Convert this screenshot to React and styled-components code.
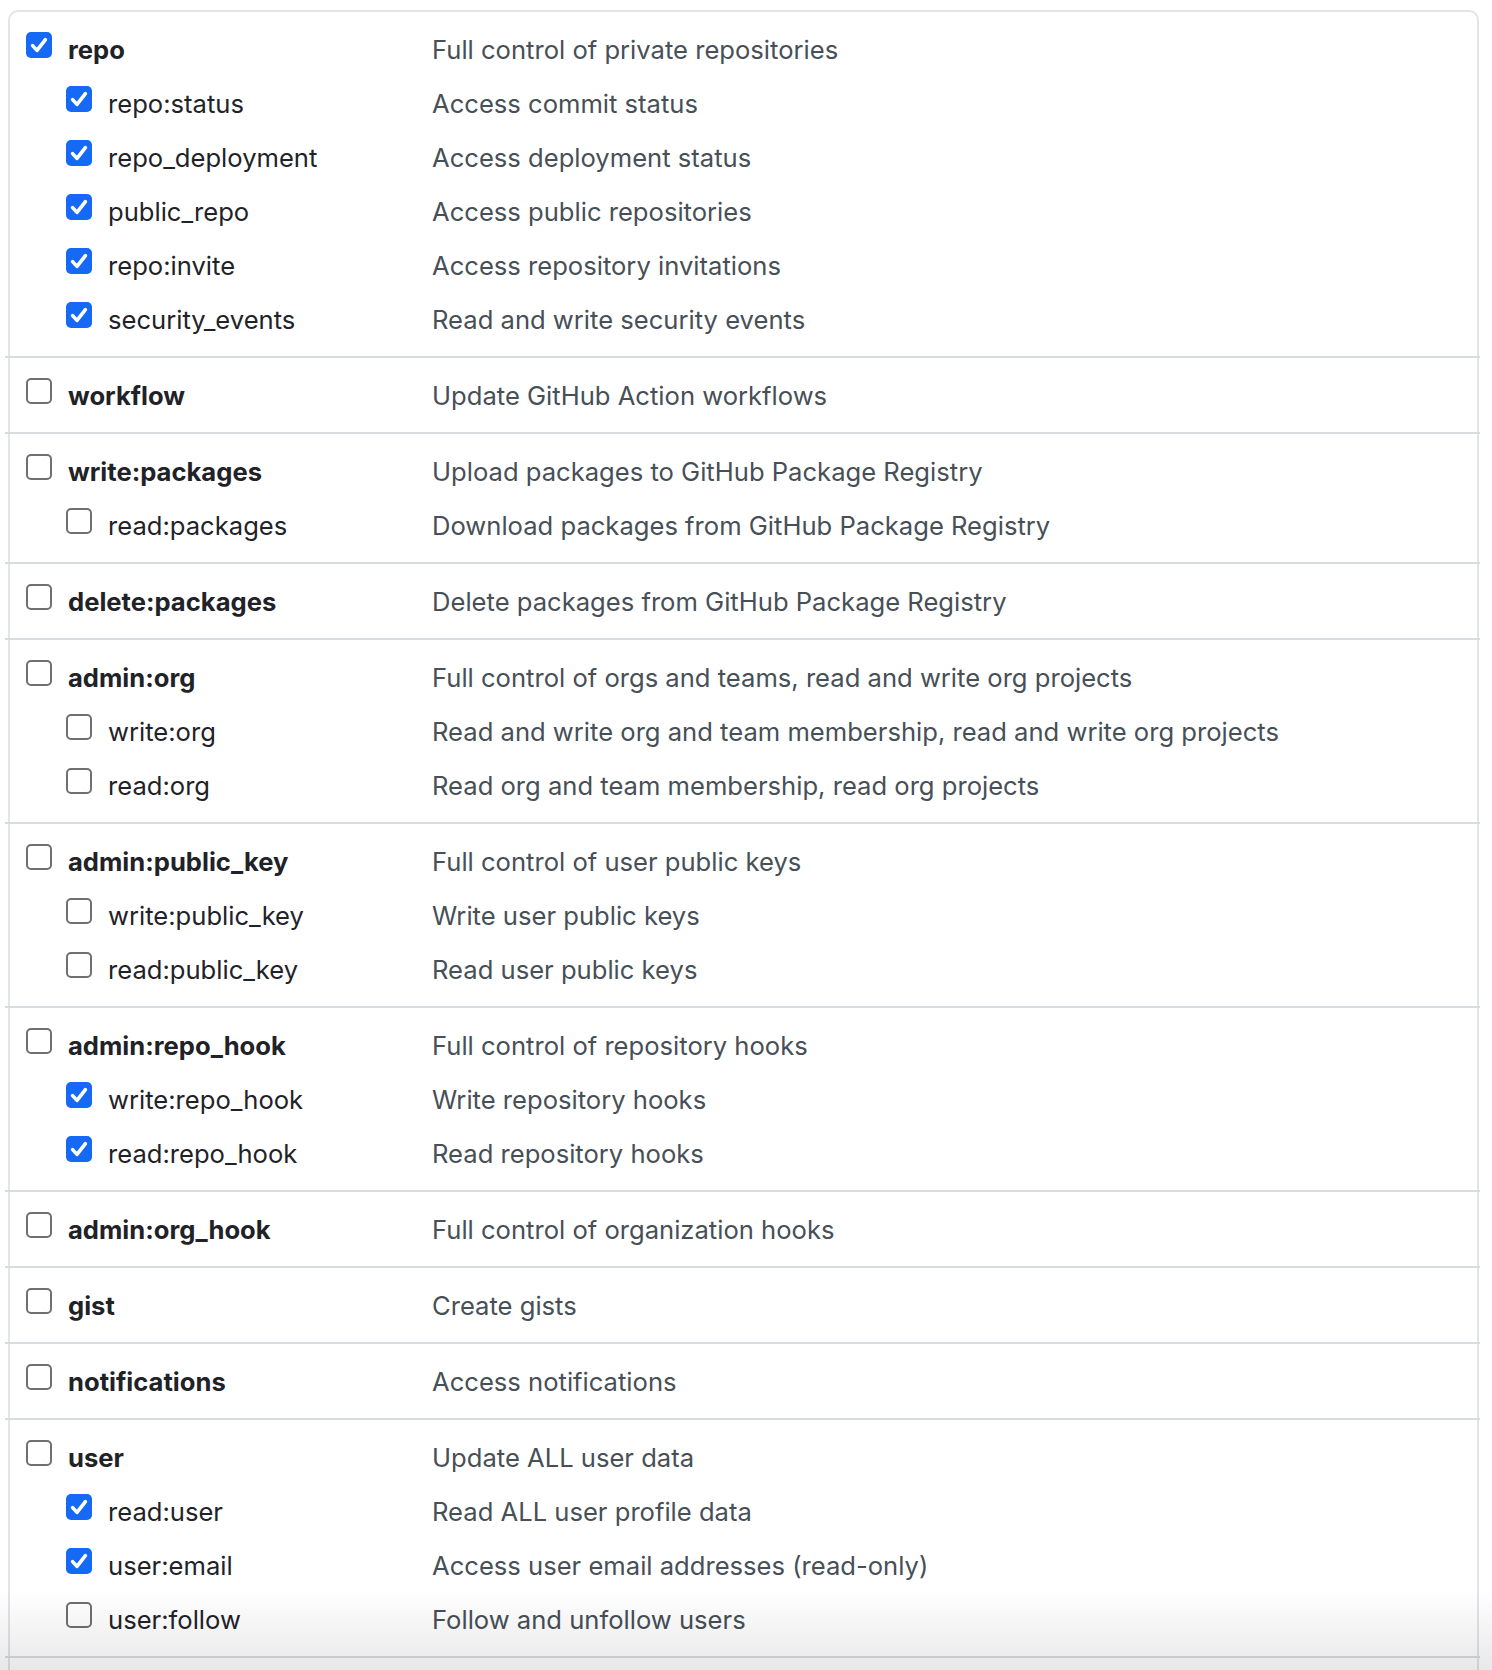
import React from "react";
import styled, { createGlobalStyle } from "styled-components";

const GlobalStyle = createGlobalStyle`
  html, body {
    margin: 0;
    padding: 0;
    background: #ffffff;
    height: 1670px;
    overflow: hidden;
  }
  body {
    font-family: Inter, "Noto Sans", "Liberation Sans", sans-serif;
    -webkit-font-smoothing: antialiased;
  }
`;

const Page = styled.div`
  padding: 10px 13px 0 8px;
`;

const ScopeList = styled.div`
  border: 2px solid #e1e4e8;
  border-bottom: none;
  border-radius: 10px 10px 0 0;
`;

const Group = styled.div`
  margin: 0 -3px 0 -5px;
  padding: 6px 3px 14px 5px;
  border-top: ${(p) => (p.first ? "none" : "2px solid #d8dcdf")};
  min-height: 40px;
`;

const Row = styled.div`
  display: grid;
  grid-template-columns: 422px 1fr;
  align-items: center;
  height: 54px;
`;

const LabelCell = styled.label`
  display: flex;
  align-items: center;
  gap: 16px;
  padding-left: ${(p) => (p.sub ? "56px" : "16px")};
  font-size: 25.6px;
  font-weight: ${(p) => (p.sub ? 400 : 700)};
  color: #1f2328;
`;

const LabelText = styled.span`
  padding-top: 8px;
`;

const Description = styled.span`
  padding-top: 8px;
  font-size: 25.6px;
  color: #474f57;
`;

const Box = styled.span`
  flex: none;
  box-sizing: border-box;
  width: 26px;
  height: 26px;
  border-radius: 5px;
  display: inline-flex;
  align-items: center;
  justify-content: center;
  background: ${(p) => (p.checked ? "#1569f4" : "#ffffff")};
  border: ${(p) => (p.checked ? "none" : "2px solid #707070")};
`;

const Fade = styled.div`
  position: fixed;
  left: 0;
  right: 0;
  bottom: 0;
  height: 80px;
  pointer-events: none;
  background: linear-gradient(rgba(0, 0, 0, 0), rgba(0, 0, 0, 0.09));
`;

const Checkbox = ({ checked }) => (
  <Box checked={checked}>
    {checked && (
      <svg width="26" height="26" viewBox="0 0 26 26">
        <path
          d="M6.6 13.6 L11 18.4 L19.4 7.6"
          fill="none"
          stroke="#fff"
          strokeWidth="3.6"
          strokeLinecap="round"
          strokeLinejoin="round"
        />
      </svg>
    )}
  </Box>
);

const scopes = [
  {
    name: "repo", desc: "Full control of private repositories", checked: true,
    children: [
      { name: "repo:status", desc: "Access commit status", checked: true },
      { name: "repo_deployment", desc: "Access deployment status", checked: true },
      { name: "public_repo", desc: "Access public repositories", checked: true },
      { name: "repo:invite", desc: "Access repository invitations", checked: true },
      { name: "security_events", desc: "Read and write security events", checked: true },
    ],
  },
  { name: "workflow", desc: "Update GitHub Action workflows" },
  {
    name: "write:packages", desc: "Upload packages to GitHub Package Registry",
    children: [{ name: "read:packages", desc: "Download packages from GitHub Package Registry" }],
  },
  { name: "delete:packages", desc: "Delete packages from GitHub Package Registry" },
  {
    name: "admin:org", desc: "Full control of orgs and teams, read and write org projects",
    children: [
      { name: "write:org", desc: "Read and write org and team membership, read and write org projects" },
      { name: "read:org", desc: "Read org and team membership, read org projects" },
    ],
  },
  {
    name: "admin:public_key", desc: "Full control of user public keys",
    children: [
      { name: "write:public_key", desc: "Write user public keys" },
      { name: "read:public_key", desc: "Read user public keys" },
    ],
  },
  {
    name: "admin:repo_hook", desc: "Full control of repository hooks",
    children: [
      { name: "write:repo_hook", desc: "Write repository hooks", checked: true },
      { name: "read:repo_hook", desc: "Read repository hooks", checked: true },
    ],
  },
  { name: "admin:org_hook", desc: "Full control of organization hooks" },
  { name: "gist", desc: "Create gists" },
  { name: "notifications", desc: "Access notifications" },
  {
    name: "user", desc: "Update ALL user data",
    children: [
      { name: "read:user", desc: "Read ALL user profile data", checked: true },
      { name: "user:email", desc: "Access user email addresses (read-only)", checked: true },
      { name: "user:follow", desc: "Follow and unfollow users" },
    ],
  },
];

const ScopeRow = ({ scope, sub }) => (
  <Row>
    <LabelCell sub={sub}>
      <Checkbox checked={scope.checked} />
      <LabelText>{scope.name}</LabelText>
    </LabelCell>
    <Description>{scope.desc}</Description>
  </Row>
);

export default function App() {
  return (
    <Page>
      <GlobalStyle />
      <ScopeList>
        {scopes.map((scope, i) => (
          <Group key={scope.name} first={i === 0}>
            <ScopeRow scope={scope} />
            {scope.children &&
              scope.children.map((child) => (
                <ScopeRow key={child.name} scope={child} sub />
              ))}
          </Group>
        ))}
        <Group />
      </ScopeList>
      <Fade />
    </Page>
  );
}
